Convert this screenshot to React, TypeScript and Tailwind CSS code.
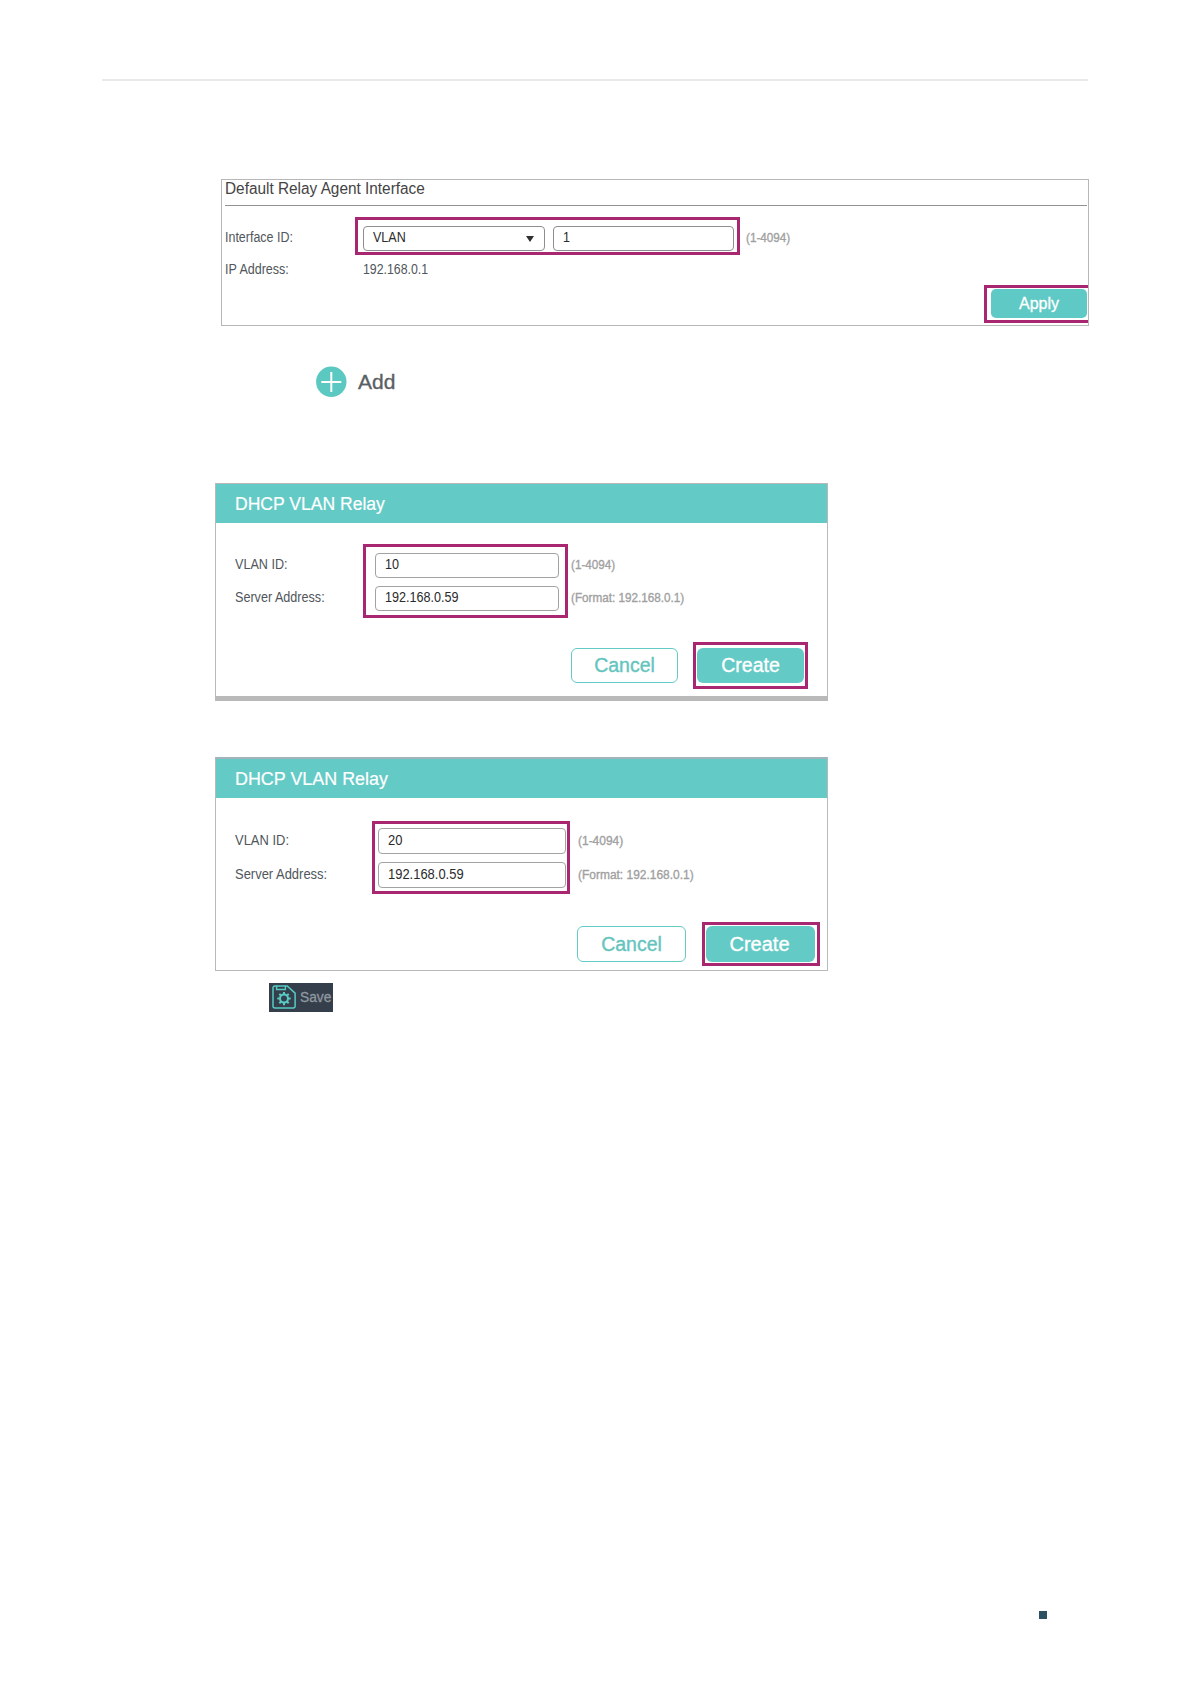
import clsx from 'clsx';
import React from 'react';

interface DialogProps {
    vlanId: string;
    server: string;
    frame: string;
    title: string;
    fields: string;
    labels: string;
    row: string;
    squeeze: string;
    highlight: string;
    input: string;
    hints: string;
    hintSqueeze: string;
    actions: string;
    cancel: string;
    createBox: string;
    create: string;
}

const dialogs: DialogProps[] = [
    {
        vlanId: '10',
        server: '192.168.0.59',
        frame: 'mt-[86px] h-[218px] border-b-[5px]',
        title: 'scale-x-[0.975]',
        fields: 'mt-[21px]',
        labels: 'w-[147px] pt-1',
        row: 'h-[33px]',
        squeeze: 'scale-x-[0.9]',
        highlight: 'w-[205px] h-[74px] pl-[9px] pt-[6px]',
        input: 'w-[184px] h-[25px] leading-[21px]',
        hints: 'ml-[3px] pt-1',
        hintSqueeze: 'scale-x-[0.9]',
        actions: 'mt-6 pl-[355px]',
        cancel: 'mt-[6px] w-[107px] h-[35px] leading-[31px] text-[19.5px]',
        createBox: 'ml-[15px] w-[115px] h-[47px] pl-[1px] pt-[3px]',
        create: 'w-[107px] h-[35px] leading-[33px] text-[19.5px]',
    },
    {
        vlanId: '20',
        server: '192.168.0.59',
        frame: 'mt-14 h-[214px] border-t-2 border-t-[#a3b3ba]',
        title: 'scale-x-[0.995] -mt-[1px]',
        fields: 'mt-[23px]',
        labels: 'w-[156px] pt-[3px]',
        row: 'h-[34px]',
        squeeze: 'scale-x-[0.925]',
        highlight: 'w-[198px] h-[73px] pl-[3px] pt-[4px]',
        input: 'w-[188px] h-[26px] leading-[22px]',
        hints: 'ml-2 pt-[3px]',
        hintSqueeze: 'scale-x-[0.92]',
        actions: 'mt-7 pl-[361px]',
        cancel: 'mt-1 w-[109px] h-9 leading-[34px] text-[19.5px]',
        createBox: 'ml-4 w-[118px] h-11 pl-[1px] pt-[1px]',
        create: 'w-[109px] h-9 pr-[2px] leading-[36px] text-[20px]',
    },
];

// Text drawn slightly narrower than its font
function Narrow({ className, children }: { className?: string; children: React.ReactNode }) {
    return (
        <span className={clsx('inline-block origin-left whitespace-nowrap', className)}>{children}</span>
    );
}

function RelayDialog(props: DialogProps) {
    return (
        <section className={clsx('ml-[215px] w-[613px] border border-[#b9b9b9]', props.frame)}>
            <h2 className="h-[39px] bg-[#64cac6] pl-[19px] text-[18px] leading-[41px] text-white [-webkit-text-stroke:0.2px]">
                <Narrow className={props.title}>DHCP VLAN Relay</Narrow>
            </h2>

            <div className={clsx('flex', props.fields)}>
                <div className={clsx('pl-[19px] text-sm leading-[32px] text-[#50565b]', props.labels)}>
                    <div className={props.row}>
                        <Narrow className={props.squeeze}>VLAN ID:</Narrow>
                    </div>
                    <div className={props.row}>
                        <Narrow className={props.squeeze}>Server Address:</Narrow>
                    </div>
                </div>
                <div className={clsx('flex flex-col gap-2 border-[3px] border-[#a92670]', props.highlight)}>
                    {[props.vlanId, props.server].map((value) => (
                        <div
                            key={value}
                            className={clsx('rounded border border-[#a2a2a2] pl-[9px] text-sm text-[#2b2b2b]', props.input)}
                        >
                            <Narrow className={props.squeeze}>{value}</Narrow>
                        </div>
                    ))}
                </div>
                <div className={clsx('text-[13px] leading-[33px] text-[#a0a0a0] [-webkit-text-stroke:0.35px]', props.hints)}>
                    <div className={props.row}>
                        <Narrow className={props.hintSqueeze}>(1-4094)</Narrow>
                    </div>
                    <div className={props.row}>
                        <Narrow className={props.hintSqueeze}>(Format: 192.168.0.1)</Narrow>
                    </div>
                </div>
            </div>

            <div className={clsx('flex items-start [-webkit-text-stroke:0.35px]', props.actions)}>
                <button
                    className={clsx('rounded-md border border-[#64cac6] text-center text-[#64c4be]', props.cancel)}
                >
                    Cancel
                </button>
                <div className={clsx('border-[3px] border-[#a92670]', props.createBox)}>
                    <button
                        className={clsx('block rounded-md bg-[#64cac6] text-center text-white', props.create)}
                    >
                        Create
                    </button>
                </div>
            </div>
        </section>
    );
}

export default function App() {
    return (
        <div className="flex h-[1684px] w-[1191px] flex-col bg-white pt-[79px] font-['Liberation_Sans',Arial,sans-serif]">
            <hr className="ml-[102px] h-[2px] w-[986px] border-0 bg-[#e8e9e8]" />

            {/* Default relay agent */}
            <section className="ml-[221px] mt-[98px] h-[147px] w-[868px] border border-[#b7b7b7]">
                <h2 className="ml-[3px] mr-[1px] h-[26px] border-b border-[#929292] text-base leading-[18px] text-[#444]">
                    <Narrow className="scale-x-[0.96]">Default Relay Agent Interface</Narrow>
                </h2>
                <div className="mt-[11px] flex h-[38px] text-sm">
                    <div className="w-[133px] pl-[3px] leading-[40px] text-[#50565b]">
                        <Narrow className="scale-x-[0.89]">Interface ID:</Narrow>
                    </div>
                    <div className="flex w-[385px] gap-2 border-[3px] border-[#a92670] pl-[5px] pt-[6px] leading-[20px] text-[#2b2b2b]">
                        <div className="flex h-[25px] w-[182px] justify-between rounded border border-[#8e8e8e] pl-[9px] pr-[10px]">
                            <Narrow className="scale-x-[0.895]">VLAN</Narrow>
                            <svg className="mt-[9px] h-[6px] w-[8px]" viewBox="0 0 8 6">
                                <path d="M0 0h8L4 6z" fill="#2f2f2f" />
                            </svg>
                        </div>
                        <div className="h-[25px] w-[181px] rounded border border-[#8e8e8e] pl-[9px]">
                            <Narrow className="scale-x-[0.895]">1</Narrow>
                        </div>
                    </div>
                    <div className="ml-[6px] text-[13px] leading-[41px] text-[#a0a0a0] [-webkit-text-stroke:0.35px]">
                        <Narrow className="scale-x-[0.9]">(1-4094)</Narrow>
                    </div>
                </div>
                <div className="flex h-[30px] pl-[3px] text-sm leading-[28px] text-[#50565b]">
                    <div className="w-[138px]">
                        <Narrow className="scale-x-[0.895]">IP Address:</Narrow>
                    </div>
                    <Narrow className="scale-x-[0.88]">192.168.0.1</Narrow>
                </div>
                <div className="flex justify-end">
                    <div className="h-[38px] w-[104px] border-y-[3px] border-l-[3px] border-[#a92670] pl-1 pt-[1px]">
                        <button className="block h-[29px] w-24 rounded-[5px] bg-[#5ec9c5] text-center text-base leading-[30px] text-white [-webkit-text-stroke:0.3px]">
                            Apply
                        </button>
                    </div>
                </div>
            </section>

            {/* Add */}
            <div className="ml-[316px] mt-10 flex h-[31px] items-center gap-3 text-[21px] leading-[31px] text-[#5a5f63] [-webkit-text-stroke:0.35px]">
                <svg className="h-[31px] w-[31px]" viewBox="0 0 31 31">
                    <circle cx="15.3" cy="15.8" r="15.2" fill="#5cc8c2" />
                    <path d="M5.3 16h20M15.3 6v20" stroke="#fff" strokeWidth="2" />
                </svg>
                <span className="-ml-[1px]">Add</span>
            </div>

            {dialogs.map((dialog) => (
                <RelayDialog key={dialog.vlanId} {...dialog} />
            ))}

            {/* Save */}
            <div className="ml-[269px] mt-3 flex h-[29px] w-16 overflow-hidden bg-[#353f4c] text-[#8f989f]">
                <svg className="ml-[3px] mt-[2px] h-6 w-6 shrink-0" viewBox="0 0 24 24" fill="none" stroke="#56cbc2">
                    <path d="M3 .9h12.2l7.9 7.2V21a2 2 0 0 1-2 2H3a2 2 0 0 1-2-2V3A2 2 0 0 1 3 .9z" strokeWidth="1.5" />
                    <path d="M4.6 1v3.5h8.8V1" strokeWidth="1.4" />
                    <circle cx="12" cy="13.6" r="4" strokeWidth="2" />
                    <path
                        d="M12 9.2V6.9M12 18v2.3M7.6 13.6H5.3M16.4 13.6h2.3M8.9 10.5 7.3 8.9M15.1 16.7l1.6 1.6M15.1 10.5l1.6-1.6M8.9 16.7l-1.6 1.6"
                        strokeWidth="2"
                    />
                </svg>
                <span className="ml-1 text-sm leading-[28px] [-webkit-text-stroke:0.3px]">
                    <Narrow className="scale-x-[0.98]">Save</Narrow>
                </span>
            </div>

            <div className="ml-[1039px] mt-[599px] h-2 w-2 bg-[#2b5263]" />
        </div>
    );
}
